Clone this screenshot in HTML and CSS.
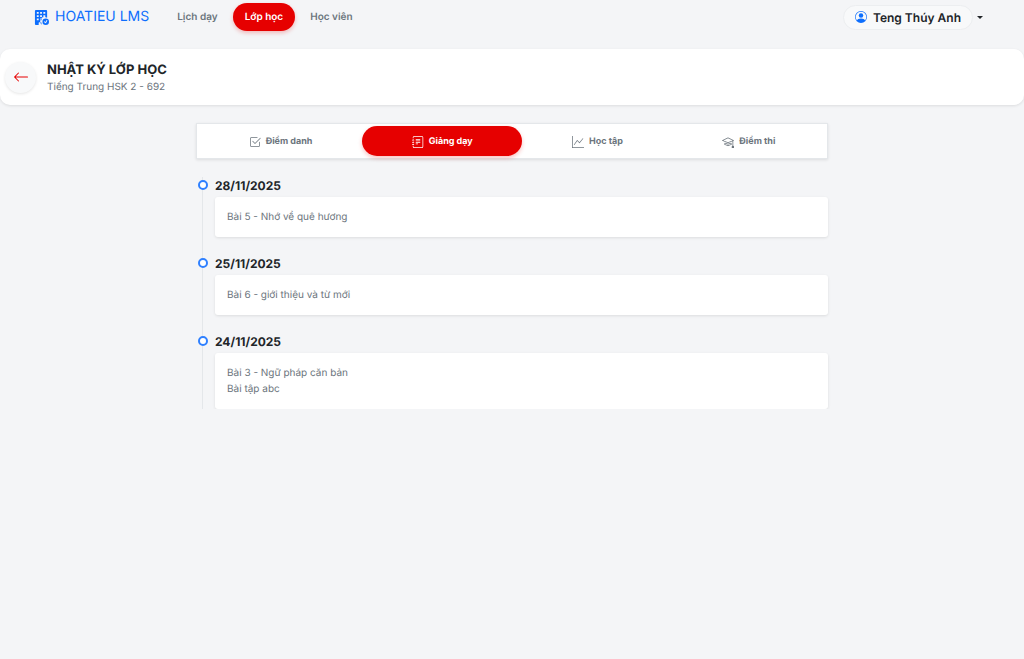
FILE: index.html
```html
<!DOCTYPE html>
<html lang="vi">
<head>
    <meta charset="UTF-8">
    <meta name="viewport" content="width=device-width, initial-scale=1.0">
    <title>HOATIEU LMS</title>
    <link rel="stylesheet" href="styles.css">
</head>
<body>
    <nav class="navbar">
        <a class="brand" href="#">
            <svg class="brand-icon" viewBox="0 0 16 16" fill="currentColor" aria-hidden="true">
                <path fill-rule="evenodd" d="M1 1a1 1 0 0 1 1-1h11a1 1 0 0 1 1 1v7.300a4.500 4.500 0 0 0-5.500 7.700H8v-2.500a.5.5 0 0 0-.5-.5h-2a.5.5 0 0 0-.5.5V16H2a1 1 0 0 1-1-1zm2 1v2h2V2zm3.500 0v2h2V2zM10 2v2h2V2zM3 5.500v2h2v-2zm3.500 0v2h2v-2zm3.500 0v2h2v-2zM3 9v2h2V9zm3.500 0v2h1.500V9z"/>
                <path d="M12.500 16a3.500 3.500 0 1 0 0-7 3.500 3.500 0 0 0 0 7m1.680-4.450-1.350 2.250a.5.5 0 0 1-.74.17l-1.200-1a.5.5 0 1 1 .6-.8l.8.6 1.030-1.730a.5.5 0 1 1 .86.510"/>
            </svg>
            HOATIEU LMS
        </a>
        <ul class="menu">
            <li><a class="menu-link" href="#">Lịch dạy</a></li>
            <li><a class="menu-link active" href="#" aria-current="page">Lớp học</a></li>
            <li><a class="menu-link" href="#">Học viên</a></li>
        </ul>
        <button class="user" type="button">
            <span class="user-name">
                <svg class="user-icon" viewBox="0 0 16 16" fill="currentColor" aria-hidden="true">
                    <path d="M11 6a3 3 0 1 1-6 0 3 3 0 0 1 6 0"/>
                    <path fill-rule="evenodd" d="M0 8a8 8 0 1 1 16 0A8 8 0 0 1 0 8m8-7a7 7 0 0 0-5.468 11.370C3.242 11.226 4.805 10 8 10s4.757 1.225 5.468 2.370A7 7 0 0 0 8 1"/>
                </svg>
                Teng Thúy Anh
            </span>
            <span class="caret"></span>
        </button>
    </nav>

    <header class="page-header">
        <a class="back" href="#" aria-label="Quay lại">
            <svg viewBox="0 0 16 16" width="16" height="16" fill="currentColor" aria-hidden="true">
                <path fill-rule="evenodd" d="M15 8a.5.5 0 0 0-.5-.5H2.707l3.147-3.146a.5.5 0 1 0-.708-.708l-4 4a.5.5 0 0 0 0 .708l4 4a.5.5 0 0 0 .708-.708L2.707 8.500H14.500A.5.5 0 0 0 15 8"/>
            </svg>
        </a>
        <div>
            <h1 class="page-title">NHẬT KÝ LỚP HỌC</h1>
            <p class="page-subtitle">Tiếng Trung HSK 2 - 692</p>
        </div>
    </header>

    <main class="container">
        <div class="tabs" role="tablist">
            <button class="tab" type="button" role="tab" aria-selected="false">
                <svg class="tab-icon" viewBox="0 0 16 16" fill="currentColor" aria-hidden="true">
                    <path d="M3 14.500A1.500 1.500 0 0 1 1.500 13V3A1.500 1.500 0 0 1 3 1.500h8a.5.5 0 0 1 0 1H3a.5.5 0 0 0-.5.5v10a.5.5 0 0 0 .5.5h10a.5.5 0 0 0 .5-.5V8a.5.5 0 0 1 1 0v5a1.500 1.500 0 0 1-1.500 1.500z"/>
                    <path d="m8.354 10.354 7-7a.5.5 0 0 0-.708-.708L8 9.293 5.354 6.646a.5.5 0 1 0-.708.708l3 3a.5.5 0 0 0 .708 0"/>
                </svg>
                Điểm danh
            </button>
            <button class="tab active" type="button" role="tab" aria-selected="true">
                <svg class="tab-icon" viewBox="0 0 16 16" fill="currentColor" aria-hidden="true">
                    <path d="M5 4h6v1H5zm0 2h6v1H5zm0 2h6v1H5zm0 2h3v1H5z"/>
                    <path d="M3 0h10a2 2 0 0 1 2 2v12a2 2 0 0 1-2 2H3a2 2 0 0 1-2-2v-1h1v1a1 1 0 0 0 1 1h10a1 1 0 0 0 1-1V2a1 1 0 0 0-1-1H3a1 1 0 0 0-1 1v1H1V2a2 2 0 0 1 2-2"/>
                    <path d="M1 5v-.5a.5.5 0 0 1 1 0V5h.5a.5.5 0 0 1 0 1h-2a.5.5 0 0 1 0-1zm0 3v-.5a.5.5 0 0 1 1 0V8h.5a.5.5 0 0 1 0 1h-2a.5.5 0 0 1 0-1zm0 3v-.5a.5.5 0 0 1 1 0v.5h.5a.5.5 0 0 1 0 1h-2a.5.5 0 0 1 0-1z"/>
                </svg>
                Giảng dạy
            </button>
            <button class="tab" type="button" role="tab" aria-selected="false">
                <svg class="tab-icon" viewBox="0 0 16 16" fill="currentColor" aria-hidden="true">
                    <path fill-rule="evenodd" d="M0 0h1v15h15v1H0zm14.817 3.113a.5.5 0 0 1 .070.704l-4.500 5.500a.5.5 0 0 1-.74.037L7.060 6.767l-3.656 5.027a.5.5 0 0 1-.808-.588l4-5.500a.5.5 0 0 1 .758-.060l2.609 2.610 4.150-5.073a.5.5 0 0 1 .704-.070"/>
                </svg>
                Học tập
            </button>
            <button class="tab" type="button" role="tab" aria-selected="false">
                <svg class="tab-icon" viewBox="0 0 16 16" fill="currentColor" aria-hidden="true">
                    <path d="M8.211 2.047a.5.5 0 0 0-.422 0l-7.500 3.500a.5.5 0 0 0 .025.917l7.500 3a.5.5 0 0 0 .372 0L14 7.140V13a1 1 0 0 0-1 1v2h3v-2a1 1 0 0 0-1-1V6.739l.686-.275a.5.5 0 0 0 .025-.917zM8 8.460 1.758 5.965 8 3.052l6.242 2.913z"/>
                    <path d="M4.176 9.032a.5.5 0 0 0-.656.327l-.5 1.700a.5.5 0 0 0 .294.605l4.500 1.800a.5.5 0 0 0 .372 0l4.500-1.800a.5.5 0 0 0 .294-.605l-.5-1.700a.5.5 0 0 0-.656-.327L8 10.466zm-.068 1.873.22-.748 3.496 1.311a.5.5 0 0 0 .352 0l3.496-1.311.22.748L8 12.460z"/>
                </svg>
                Điểm thi
            </button>
        </div>

        <div class="timeline">
            <section class="entry">
                <h2 class="entry-date">28/11/2025</h2>
                <div class="entry-card">Bài 5 - Nhớ về quê hương</div>
            </section>
            <section class="entry">
                <h2 class="entry-date">25/11/2025</h2>
                <div class="entry-card">Bài 6 - giới thiệu và từ mới</div>
            </section>
            <section class="entry">
                <h2 class="entry-date">24/11/2025</h2>
                <div class="entry-card">Bài 3 - Ngữ pháp căn bản<br>Bài tập abc</div>
            </section>
        </div>
    </main>
</body>
</html>
```

FILE: styles.css
```css
*,
*::before {
    box-sizing: border-box;
}

body {
    margin: 0;
    background-color: #f4f5f7;
    color: #212529;
    font-family: Inter, "Liberation Sans", sans-serif;
    font-size: 10px;
    line-height: 16px;
    text-rendering: geometricPrecision;
}

a {
    text-decoration: none;
}

button {
    border: 0;
    background: none;
    font-family: inherit;
    text-rendering: inherit;
    cursor: pointer;
}

/* Top navigation */
.navbar {
    display: flex;
    align-items: center;
    padding: 3px 41px 0 34px;
    margin-bottom: 18px;
}

.brand {
    display: flex;
    align-items: center;
    gap: 6px;
    margin-right: 16px;
    color: #0d6efd;
    font-size: 14px;
}

.brand-icon {
    width: 15px;
    height: 15px;
}

.menu {
    display: flex;
    gap: 3px;
    margin: 0;
    padding: 0;
    list-style: none;
}

.menu-link {
    display: block;
    padding: 6px 12px;
    border-radius: 14px;
    color: #6c757d;
    font-weight: 600;
}

.menu-link.active {
    background-color: #e60000;
    color: #fff;
    box-shadow: 0 2px 4px rgba(230, 0, 0, 0.25);
}

.user {
    display: flex;
    align-items: center;
    gap: 4px;
    margin-left: auto;
    padding: 0;
    color: #212529;
    font-size: 12px;
    font-weight: 600;
}

.user-name {
    display: flex;
    align-items: center;
    gap: 6px;
    padding: 4px 11px;
    border: 1px solid #eceef0;
    border-radius: 13px;
    background-color: #f8f9fa;
}

.user-icon {
    width: 12px;
    height: 12px;
    color: #0d6efd;
}

.caret {
    border-top: 3px solid #212529;
    border-right: 3px solid transparent;
    border-left: 3px solid transparent;
}

/* Page header */
.page-header {
    display: flex;
    align-items: center;
    gap: 11px;
    padding: 11px 5px;
    border-radius: 10px;
    background-color: #fff;
    box-shadow: 0 1px 3px rgba(0, 0, 0, 0.1);
}

.back {
    display: flex;
    align-items: center;
    justify-content: center;
    width: 31px;
    height: 31px;
    border-radius: 50%;
    background-color: #f8f9fa;
    color: #e60000;
    box-shadow: 0 1px 3px rgba(0, 0, 0, 0.1);
}

.page-title {
    margin: 0;
    font-size: 13px;
    font-weight: 700;
    line-height: 20px;
}

.page-subtitle {
    margin: 0;
    color: #6c757d;
    line-height: 14px;
}

/* Tabs */
.container {
    width: 62%;
    max-width: 632px;
    margin: 18px auto 0;
}

.tabs {
    display: flex;
    padding: 2px;
    border: 1px solid #e4e7ea;
    background-color: #fff;
    box-shadow: 0 1px 3px rgba(0, 0, 0, 0.1);
}

.tab {
    display: flex;
    flex: 1 1 auto;
    align-items: center;
    justify-content: center;
    gap: 5px;
    padding: 8px 12px 6px;
    border-radius: 15px;
    color: #6c757d;
    font-size: 9px;
    font-weight: 700;
    line-height: 16px;
}

.tab.active {
    background-color: #e60000;
    color: #fff;
    box-shadow: 0 2px 4px rgba(230, 0, 0, 0.25);
}

.tab-icon {
    width: 12px;
    height: 12px;
}

/* Timeline */
.timeline {
    position: relative;
    display: flex;
    flex-direction: column;
    gap: 18px;
    margin-top: 18px;
    padding-left: 19px;
}

.timeline::before {
    content: "";
    position: absolute;
    top: 0;
    bottom: 0;
    left: 6px;
    width: 1px;
    background-color: #e4e7ea;
}

.entry {
    position: relative;
}

.entry::before {
    content: "";
    position: absolute;
    top: 3px;
    left: -17px;
    width: 10px;
    height: 10px;
    border: 2px solid #2f80ff;
    border-radius: 50%;
    background-color: #fff;
}

.entry-date {
    margin: 0 0 2px;
    font-size: 12px;
    font-weight: 700;
    line-height: 18px;
}

.entry-card {
    padding: 12px;
    border-radius: 3px;
    background-color: #fff;
    color: #6c757d;
    box-shadow: 0 1px 3px rgba(0, 0, 0, 0.1);
}
```
